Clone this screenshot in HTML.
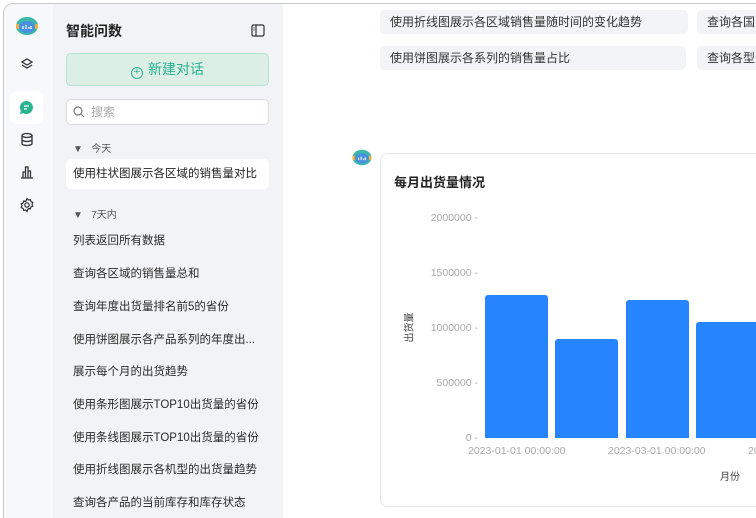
<!DOCTYPE html>
<html><head><meta charset="utf-8"><style>
*{margin:0;padding:0;box-sizing:border-box}
html,body{width:756px;height:518px;overflow:hidden}
body{background:#fff;font-family:"Liberation Sans","Noto Sans CJK SC",sans-serif;position:relative;color:#222}
.frame{position:absolute;left:3px;top:3px;width:800px;height:540px;border:1px solid #c8c8c8;border-radius:10px;overflow:hidden;background:#fff}
.rail{position:absolute;left:0;top:0;width:49px;height:100%;background:#f7f8f9}
.side{position:absolute;left:49px;top:0;width:230px;height:100%;background:#f2f3f4}
.abs{position:absolute}
.chip{position:absolute;height:24px;background:#f3f4f5;border-radius:5px;font-size:12px;line-height:24px;padding-left:10px;color:#333;white-space:nowrap;overflow:hidden}
.item{position:absolute;left:73px;font-size:11.5px;color:#2a2a2a;white-space:nowrap}
.yl{position:absolute;font-size:10.5px;color:#a9a9a9;text-align:right;width:64px}
.bar{position:absolute;background:#2684ff;border-radius:3px 3px 0 0}
</style></head><body>
<div class="frame">
<div class="rail"></div>
<div class="side"></div>
</div>
<svg class="abs" style="left:14px;top:15px" width="26" height="22" viewBox="0 0 26 22"><ellipse cx="13" cy="11" rx="11" ry="9" fill="#3bb8a8"/><ellipse cx="13" cy="12" rx="8" ry="6" fill="#4a90e2"/><rect x="2" y="9" width="3" height="5" rx="1" fill="#f5b041"/><rect x="21" y="9" width="3" height="5" rx="1" fill="#f5b041"/><path d="M9 14v-3M12 14v-4M15 14v-2M17 14v-3" stroke="#fff" stroke-width="1.2"/></svg>
<svg class="abs" style="left:20px;top:57px" width="14" height="14" viewBox="0 0 14 14" fill="none" stroke="#333" stroke-width="1.3"><path d="M7 2l5 3-5 3-5-3z"/><path d="M2 8l5 3 5-3"/></svg>
<div class="abs" style="left:10px;top:91px;width:33px;height:33px;background:#fff;border-radius:7px"></div>
<svg class="abs" style="left:19px;top:100px" width="15" height="15" viewBox="0 0 15 15"><path d="M7.5 1a6.5 6.5 0 1 1-3.2 12.2L1 14l.8-3.2A6.5 6.5 0 0 1 7.5 1z" fill="#2ab38f"/><path d="M5 6h5M5 9h3" stroke="#fff" stroke-width="1.3"/></svg>
<svg class="abs" style="left:20px;top:132px" width="14" height="15" viewBox="0 0 14 15" fill="none" stroke="#333" stroke-width="1.3"><ellipse cx="7" cy="3.5" rx="5" ry="2"/><path d="M2 3.5v8c0 1.1 2.2 2 5 2s5-.9 5-2v-8M2 7.5c0 1.1 2.2 2 5 2s5-.9 5-2"/></svg>
<svg class="abs" style="left:20px;top:165px" width="14" height="14" viewBox="0 0 14 14" fill="none" stroke="#333" stroke-width="1.3"><path d="M1 13h12M3 13V7h2.5v6M5.5 13V2H8v11M8 13V6h2.5v7"/></svg>
<svg class="abs" style="left:19px;top:197px" width="16" height="16" viewBox="0 0 16 16" fill="none" stroke="#333" stroke-width="1.2"><circle cx="8" cy="8" r="2.2"/><path d="M8 1.5l1.3 1.6 2-.5.6 2 1.9.8-.8 1.9.8 1.9-1.9.8-.6 2-2-.5L8 14.5l-1.3-1.6-2 .5-.6-2-1.9-.8.8-1.9-.8-1.9 1.9-.8.6-2 2 .5z"/></svg>
<div class="abs" style="left:66px;top:21px;font-size:14px;font-weight:bold;color:#222">智能问数</div>
<svg class="abs" style="left:251px;top:24px" width="14" height="13" viewBox="0 0 14 13" fill="none" stroke="#333" stroke-width="1.2"><rect x="1" y="1" width="12" height="11" rx="1.5"/><path d="M5 1v11M2.5 4h1M2.5 6h1"/></svg>
<div class="abs" style="left:66px;top:53px;width:203px;height:33px;background:#dcefe7;border:1px solid #b7e0cf;border-radius:5px;color:#2ab38f;font-size:14px;line-height:31px;text-align:center"><span style="display:inline-block;width:12px;height:12px;border:1.3px solid #2ab38f;border-radius:50%;font-size:11px;line-height:9px;vertical-align:-1px;margin-right:5px">+</span>新建对话</div>
<div class="abs" style="left:66px;top:99px;width:203px;height:26px;background:#fff;border:1px solid #dcdcdc;border-radius:5px;font-size:12px;color:#aaa;line-height:24px;padding-left:24px">搜索</div>
<svg class="abs" style="left:73px;top:106px" width="12" height="12" viewBox="0 0 12 12" fill="none" stroke="#777" stroke-width="1.2"><circle cx="5" cy="5" r="4"/><path d="M8 8l3 3"/></svg>
<div class="abs" style="left:73px;top:140px;font-size:10px;color:#555">▼&nbsp;&nbsp;&nbsp;今天</div>
<div class="abs" style="left:66px;top:159px;width:203px;height:30px;background:#fff;border-radius:5px;font-size:11.5px;line-height:30px;padding-left:7px;color:#222;white-space:nowrap">使用柱状图展示各区域的销售量对比</div>
<div class="abs" style="left:73px;top:206px;font-size:10px;color:#555">▼&nbsp;&nbsp;&nbsp;7天内</div>
<div class="item" style="top:232px">列表返回所有数据</div>
<div class="item" style="top:265px">查询各区域的销售量总和</div>
<div class="item" style="top:298px">查询年度出货量排名前5的省份</div>
<div class="item" style="top:331px">使用饼图展示各产品系列的年度出...</div>
<div class="item" style="top:363px">展示每个月的出货趋势</div>
<div class="item" style="top:396px">使用条形图展示TOP10出货量的省份</div>
<div class="item" style="top:429px">使用条线图展示TOP10出货量的省份</div>
<div class="item" style="top:461px">使用折线图展示各机型的出货量趋势</div>
<div class="item" style="top:494px">查询各产品的当前库存和库存状态</div>
<div class="chip" style="left:380px;top:10px;width:308px">使用折线图展示各区域销售量随时间的变化趋势</div>
<div class="chip" style="left:697px;top:10px;width:70px">查询各国家</div>
<div class="chip" style="left:380px;top:46px;width:306px">使用饼图展示各系列的销售量占比</div>
<div class="chip" style="left:697px;top:46px;width:70px">查询各型号</div>
<svg class="abs" style="left:350px;top:148px" width="24" height="19" viewBox="0 0 26 22"><ellipse cx="13" cy="11" rx="11" ry="9" fill="#3bb8a8"/><ellipse cx="13" cy="12" rx="8" ry="6" fill="#4a90e2"/><rect x="2" y="9" width="3" height="5" rx="1" fill="#f5b041"/><rect x="21" y="9" width="3" height="5" rx="1" fill="#f5b041"/><path d="M9 14v-3M12 14v-4M15 14v-2M17 14v-3" stroke="#fff" stroke-width="1.2"/></svg>
<div class="abs" style="left:380px;top:153px;width:400px;height:354px;border:1px solid #e4e4e4;border-radius:8px;background:#fff"></div>
<div class="abs" style="left:394px;top:172px;font-size:13px;font-weight:bold;color:#222">每月出货量情况</div>
<div class="yl" style="left:414px;top:212px">2000000 -</div>
<div class="yl" style="left:414px;top:267px">1500000 -</div>
<div class="yl" style="left:414px;top:322px">1000000 -</div>
<div class="yl" style="left:414px;top:377px">500000 -</div>
<div class="yl" style="left:414px;top:432px">0 -</div>
<div class="abs" style="left:390px;top:320px;width:36px;text-align:center;font-size:10px;color:#444;transform:rotate(-90deg)">出货量</div>
<div class="bar" style="left:485px;top:295px;width:63px;height:143px"></div>
<div class="bar" style="left:555px;top:339px;width:63px;height:99px"></div>
<div class="bar" style="left:626px;top:300px;width:63px;height:138px"></div>
<div class="bar" style="left:696px;top:322px;width:63px;height:116px"></div>
<div class="abs" style="left:468px;top:445px;font-size:10.5px;color:#a9a9a9">2023-01-01 00:00:00</div>
<div class="abs" style="left:608px;top:445px;font-size:10.5px;color:#a9a9a9">2023-03-01 00:00:00</div>
<div class="abs" style="left:748px;top:445px;font-size:10.5px;color:#a9a9a9">20</div>
<div class="abs" style="left:720px;top:468px;font-size:10px;color:#444">月份</div>
</body></html>
